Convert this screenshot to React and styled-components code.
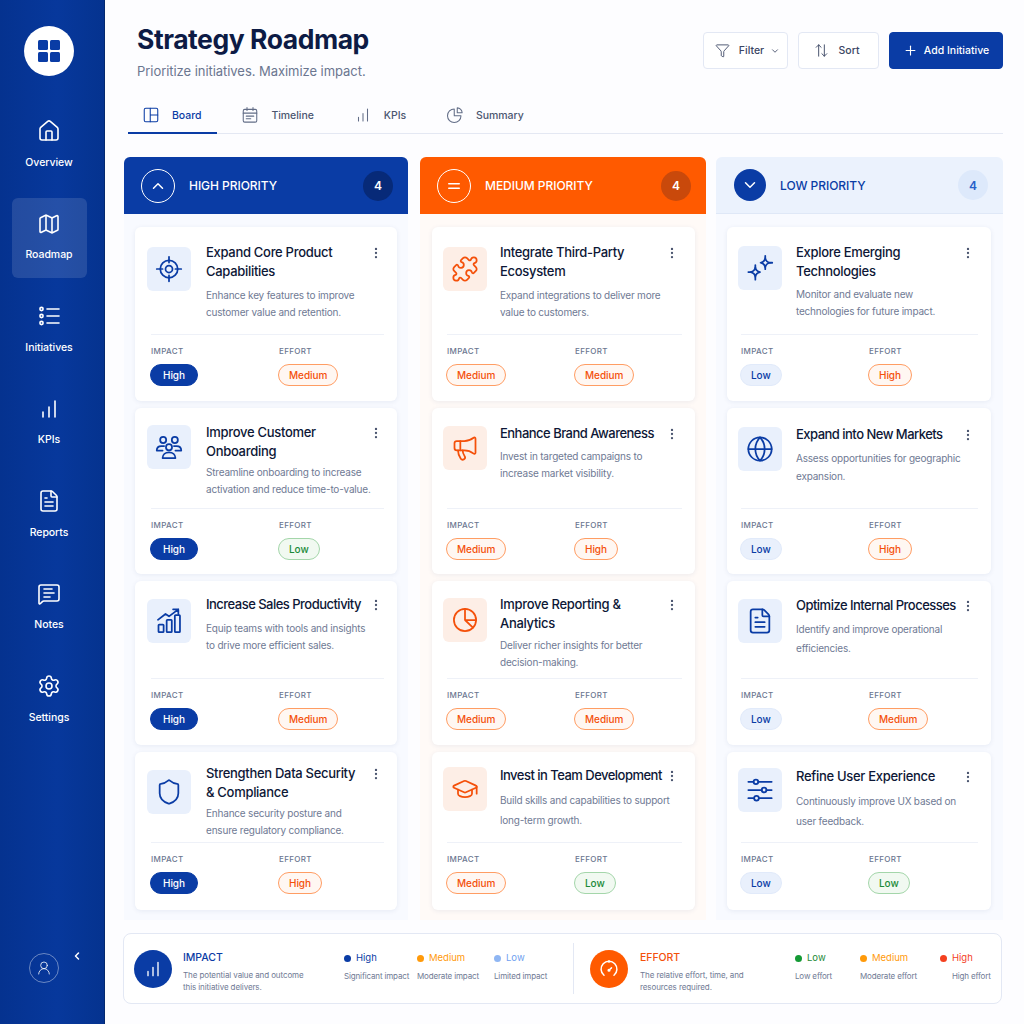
import React from "react";
import styled, { createGlobalStyle } from "styled-components";
import {
  Home, Map as MapIcon, FileText, MessageSquareText, Settings, Puzzle, Megaphone,
  GraduationCap, Globe, Shield, Funnel, ChevronDown, ChevronUp, ChevronLeft,
  Plus, Equal, EllipsisVertical, UserRound,
} from "lucide-react";

const BLUE = "#0a3ca5";
const ORANGE = "#f4500a";

const Global = createGlobalStyle`
  html, body { margin: 0; padding: 0; background: #fdfdff; }
  body { font-family: "Inter", "Liberation Sans", sans-serif; color: #0e1a3a; overflow: hidden; }
  * { box-sizing: border-box; }
`;

const Svg = ({ size = 24, sw = 1.6, children, ...p }) => (
  <svg width={size} height={size} viewBox="0 0 24 24" fill="none" stroke="currentColor" strokeWidth={sw} strokeLinecap="round" strokeLinejoin="round" {...p}>
    {children}
  </svg>
);
const Bars = (p) => (<Svg {...p}><path d="M6 20v-5M12 20v-10M18 20V4" /></Svg>);
const ListDots = (p) => (
  <Svg {...p}><circle cx="4.5" cy="5" r="1.6" /><circle cx="4.5" cy="12" r="1.6" /><circle cx="4.5" cy="19" r="1.6" /><path d="M10 5h12M10 12h12M10 19h12" /></Svg>
);
const Target = (p) => (
  <Svg {...p}><circle cx="12" cy="12" r="7.5" /><circle cx="12" cy="12" r="3" /><path d="M12 1.5v5M12 17.5v5M1.5 12h5M17.5 12h5" /></Svg>
);
const Team = (p) => (
  <Svg {...p}>
    <circle cx="7" cy="6" r="2.6" /><circle cx="17" cy="6" r="2.6" /><circle cx="12" cy="12.2" r="2.6" />
    <path d="M1.5 15c0-2.6 2-3.8 4-3.8h2.3M22.5 15c0-2.6-2-3.8-4-3.8h-2.3M1.5 15h5M22.5 15h-5" />
    <path d="M6.5 21.5c0-3 2.4-5 5.5-5s5.5 2 5.5 5z" />
  </Svg>
);
const GrowthChart = (p) => (
  <Svg {...p}>
    <rect x="3" y="15" width="4.4" height="6.5" rx=".6" /><rect x="10" y="11" width="4.4" height="10.5" rx=".6" /><rect x="17" y="7" width="4.4" height="14.5" rx=".6" />
    <path d="M2.5 11 9 6l3 2 8-6M15.5 2H20v4" />
  </Svg>
);
const Sparks = (p) => (
  <Svg {...p}>
    <path d="M16.5 3.500c.5 2.600 1.400 3.500 4 4-2.600.5-3.500 1.400-4 4-.5-2.600-1.400-3.500-4-4 2.600-.5 3.500-1.400 4-4z" />
    <path d="M8 11.500c.5 2.600 1.400 3.500 4 4-2.600.5-3.500 1.400-4 4-.5-2.600-1.400-3.500-4-4 2.600-.5 3.500-1.400 4-4z" />
    <path d="M16.5 1.500v2M16.5 11.500v1.500M8 19.500V22M8 9.500v2M2 15.500h2M20.500 7.500h2" />
  </Svg>
);
const Slices = (p) => (
  <Svg {...p}><circle cx="12" cy="12" r="9.5" /><path d="M12 2.500V12l6.800 6.600M12 12h9.500" /></Svg>
);
const Sliders = (p) => (
  <Svg {...p}>
    <path d="M2 5h4.500M10.500 5H22M2 12h11.500M17.500 12H22M2 19h5M11 19h11" />
    <circle cx="8.5" cy="5" r="2" /><circle cx="15.5" cy="12" r="2" /><circle cx="9" cy="19" r="2" />
  </Svg>
);
const BoardIcon = (p) => (<Svg {...p}><rect x="3" y="3" width="18" height="18" rx="2" /><path d="M11 3v18M11 12h10" /></Svg>);
const CalIcon = (p) => (<Svg {...p}><rect x="3" y="4.500" width="18" height="17" rx="2" /><path d="M8 2v4M16 2v4M3 9.500h18M7 13.500h10M7 17h6" /></Svg>);
const SummaryIcon = (p) => (<Svg {...p}><path d="M11 4a9 9 0 1 0 9 9h-9z" /><path d="M15 2.500a6.500 6.500 0 0 1 6.500 6.500H15z" /></Svg>);
const SortIcon = (p) => (<Svg {...p}><path d="M8 20V4M4.500 7.500 8 4l3.500 3.500M16 4v16M12.500 16.500 16 20l3.500-3.500" /></Svg>);
const GaugeIcon = (p) => (
  <Svg {...p}><path d="M6 19.500A9.500 9.500 0 1 1 18 19.500" /><path d="M12 13.500l3-3" /><circle cx="12" cy="13.500" r="1" /><path d="M12 2v2" /></Svg>
);

const Page = styled.div`
  width: 1024px; height: 1024px; display: flex; overflow: hidden; background: #fdfdff;
`;
const Sidebar = styled.aside`
  width: 105px; flex: none; height: 100%; display: flex; flex-direction: column; align-items: center;
  padding: 26px 6px 41px 0; color: #fff;
  background: linear-gradient(90deg, #05328f 0%, #07389c 55%, #05338f 100%);
  border-right: 1px solid #04296f;
`;
const Logo = styled.div`
  width: 50px; height: 50px; border-radius: 50%; background: #fff; margin-bottom: 29px; flex: none;
  display: grid; grid-template-columns: 10px 10px; grid-template-rows: 10px 10px; gap: 2px;
  place-content: center;
  & > i { background: ${BLUE}; border-radius: 1.5px; display: block; }
`;
const Nav = styled.nav`
  display: flex; flex-direction: column; gap: 12.5px; width: 75px;
`;
const NavItem = styled.div`
  height: 80px; border-radius: 6px; display: flex; flex-direction: column; align-items: center;
  padding-top: 14px; gap: 12.5px; color: #fff;
  font-size: 10.5px; font-weight: 500; letter-spacing: -0.05px;
  background: ${(p) => (p.$active ? "rgba(255,255,255,0.12)" : "transparent")};
`;
const SideFoot = styled.div`
  margin-top: auto; width: 100%; display: flex; align-items: flex-start; padding-left: 29px; gap: 12px;
`;
const Avatar = styled.div`
  width: 30px; height: 30px; border-radius: 50%; border: 1px solid rgba(255,255,255,.4);
  display: flex; align-items: center; justify-content: center; color: rgba(255,255,255,.85);
`;
const Collapse = styled.div`
  margin-top: -5px; height: 16px; display: flex; align-items: center; color: #fff;
`;
const Main = styled.main`
  flex: 1; min-width: 0; padding: 0 21px 0 19px; display: flex; flex-direction: column;
`;
const Header = styled.header`
  height: 98px; padding: 22px 0 0 13px; display: flex; justify-content: space-between; align-items: flex-start;
`;
const Title = styled.h1`
  margin: 0; font-size: 26.5px; line-height: 34px; font-weight: 700; letter-spacing: -0.45px; color: #0d1b45;
`;
const Sub = styled.p`
  margin: 7px 0 0; font-size: 13px; line-height: 16px; color: #6b7690; letter-spacing: -0.05px;
`;
const Actions = styled.div`
  display: flex; gap: 10px; margin-top: 10px;
`;
const Btn = styled.button`
  height: 37px; width: ${(p) => p.$w}px; border-radius: 4px; font: 500 10.5px "Inter", sans-serif;
  display: flex; align-items: center; justify-content: center; gap: ${(p) => p.$gap || 9}px;
  padding: 0 ${(p) => p.$pr || 0}px 0 ${(p) => p.$pl || 0}px;
  color: ${(p) => (p.$primary ? "#fff" : "#3b4663")};
  background: ${(p) => (p.$primary ? BLUE : "#fff")};
  border: 1px solid ${(p) => (p.$primary ? BLUE : "#e3e8f4")};
`;
const Caret = styled(ChevronDown)`
  margin-left: -3px;
`;
const Tabs = styled.div`
  margin-left: 4px; height: 36px; display: flex; gap: 10px; border-bottom: 1px solid #e4e8f3;
`;
const Tab = styled.div`
  height: 36px; padding: 0 16px 0 14px; display: flex; align-items: center; gap: 12px;
  font-size: 10.5px; font-weight: 500; letter-spacing: -0.05px;
  color: ${(p) => (p.$active ? BLUE : "#4b5670")};
  border-bottom: 2px solid ${(p) => (p.$active ? BLUE : "transparent")};
  & > svg { color: ${(p) => (p.$active ? BLUE : "#626d87")}; }
`;
const Board = styled.div`
  margin-top: 23px; display: flex;
`;
const Column = styled.section`
  width: ${(p) => p.$w}px; margin-left: ${(p) => p.$ml}px; flex: none;
  height: 763px; display: flex; flex-direction: column;
  background: ${(p) => (p.$tone === "orange" ? "#fffaf7" : "#f8faff")};
  border-radius: 6px 6px 0 0;
`;
const ColHead = styled.div`
  height: 57px; flex: none; display: flex; align-items: center; padding: 0 15px 0 17px;
  border-radius: 6px 6px 0 0; font-size: 12px; font-weight: 500; letter-spacing: -0.05px;
  background: ${(p) => ({ blue: BLUE, orange: "#ff5a00", light: "#ebf2fd" }[p.$tone])};
  color: ${(p) => (p.$tone === "light" ? BLUE : "#fff")};
  border-bottom: ${(p) => (p.$tone === "light" ? "1px solid #dfe8f7" : "none")};
`;
const HeadIcon = styled.div`
  border-radius: 50%; flex: none; margin-right: 14px;
  display: flex; align-items: center; justify-content: center; color: #fff;
  border: ${(p) => (p.$solid ? "none" : "1.5px solid #fff")};
  background: ${(p) => (p.$solid ? BLUE : "transparent")};
  margin-left: ${(p) => (p.$solid ? "1px" : "0")};
  width: ${(p) => (p.$solid ? "32px" : "34px")};
  height: ${(p) => (p.$solid ? "32px" : "34px")};
`;
const Count = styled.div`
  margin-left: auto; width: 30px; height: 30px; border-radius: 50%; display: flex; align-items: center; justify-content: center;
  font-size: 12px; font-weight: 600;
  background: ${(p) => ({ blue: "#072a78", orange: "#c9490b", light: "#dde9fb" }[p.$tone])};
  color: ${(p) => (p.$tone === "light" ? "#2760c9" : "#fff")};
`;
const ColBody = styled.div`
  flex: 1; display: flex; flex-direction: column; gap: 7px; padding: 13px ${(p) => p.$pr}px 0 ${(p) => p.$pl}px;
`;
const Card = styled.article`
  height: ${(p) => p.$h}px; flex: none; background: #fff; border-radius: 6px; display: flex; flex-direction: column;
  box-shadow: 0 1px 5px rgba(30, 50, 110, 0.08);
`;
const CardTop = styled.div`
  flex: 1; min-height: 0; display: grid; grid-template-columns: 44px minmax(0, 1fr) 18px; grid-template-rows: auto 1fr;
  column-gap: ${(p) => p.$gap}px; padding: 0 ${(p) => p.$r}px 0 ${(p) => p.$l}px;
`;
const IconBox = styled.div`
  grid-row: 1 / span 2; width: 44px; height: 44px; margin-top: ${(p) => p.$top}px; border-radius: 6px; display: flex; align-items: center; justify-content: center;
  background: ${(p) => (p.$tone === "orange" ? "#fdeee6" : "#e9f0fc")};
  color: ${(p) => (p.$tone === "orange" ? ORANGE : BLUE)};
`;
const CardTitle = styled.h3`
  margin: ${(p) => p.$top}px 0 0; font-size: 13px; line-height: 19px; font-weight: 500; color: #0d1736; white-space: pre;
  letter-spacing: ${(p) => (p.$tight ? "-0.52px" : "-0.3px")};
`;
const Menu = styled.div`
  display: flex; justify-content: center; color: #4b5670; margin-top: ${(p) => p.$top}px; height: 14px;
`;
const Desc = styled.p`
  grid-column: 2 / span 2; margin: ${(p) => p.$mt}px -6px 0 0; font-size: 10px; line-height: ${(p) => p.$lh}px; color: #6f7a94; letter-spacing: -0.2px; white-space: pre;
`;
const CardFoot = styled.div`
  flex: none; margin: 0 13px 0 ${(p) => p.$l}px; border-top: 1px solid #eef1f8; padding: 11px 0 ${(p) => p.$pb}px;
  display: grid; grid-template-columns: 128px 1fr;
`;
const Metric = styled.div`
  display: flex; flex-direction: column; gap: 8px; align-items: flex-start;
`;
const MetricLabel = styled.div`
  font-size: 8px; line-height: 10px; font-weight: 500; letter-spacing: 0.35px; color: #6b7690;
`;
const Pill = styled.div`
  height: 22px; margin-left: -1px; border-radius: 11px; display: flex; align-items: center;
  font-size: 10px; font-weight: 500; letter-spacing: -0.05px;
  ${(p) => ({
    solid: `background:${BLUE};color:#fff;border:1px solid ${BLUE};padding:0 12px;`,
    soft: `background:#e9f0fc;color:${BLUE};border:1px solid #e1eafa;padding:0 10px;`,
    orange: `background:#fff7f2;color:${ORANGE};border:1px solid #ff9d63;padding:0 10px;`,
    green: `background:#f1f9f1;color:#1c8a38;border:1px solid #a4d6aa;padding:0 10px;`,
  }[p.$kind])}
`;
const Legend = styled.footer`
  margin: 13px 0 0 -1px; height: 71px; width: 879px; background: #fff; border: 1px solid #e3e8f4; border-radius: 8px;
  display: flex; align-items: center; padding: 0 10px;
`;
const LegendCircle = styled.div`
  width: 38px; height: 38px; border-radius: 50%; flex: none; display: flex; align-items: center; justify-content: center; color: #fff;
  background: ${(p) => (p.$orange ? "#ff5a00" : BLUE)};
`;
const LegendText = styled.div`
  width: ${(p) => p.$w}px; flex: none; margin-left: ${(p) => p.$ml}px; padding-top: 6px;
`;
const LegendTitle = styled.div`
  font-size: 10.5px; line-height: 14px; font-weight: 500; color: ${(p) => (p.$orange ? ORANGE : BLUE)}; letter-spacing: -0.05px;
`;
const LegendDesc = styled.div`
  margin-top: 4px; font-size: 8px; line-height: 12px; color: #6f7a94; letter-spacing: -0.1px; white-space: pre-line;
`;
const LegendItem = styled.div`
  width: ${(p) => p.$w}px; flex: none; display: flex; flex-direction: column; gap: 5px; padding-bottom: 4px;
`;
const LegendKey = styled.div`
  display: flex; align-items: center; gap: 5px; font-size: 9.5px; line-height: 14px; color: ${(p) => p.$c};
  &::before { content: ""; width: 7px; height: 7px; border-radius: 50%; background: ${(p) => p.$dot || p.$c}; }
`;
const LegendSub = styled.div`
  font-size: 8px; line-height: 12px; color: #6f7a94; white-space: nowrap; letter-spacing: -0.15px;
  margin-left: ${(p) => p.$indent || 0}px;
`;
const Rule = styled.div`
  width: 1px; height: 51px; background: #e3e8f4; margin: 0 16px 0 ${(p) => p.$ml}px; flex: none;
`;

const nav = [
  ["Overview", Home], ["Roadmap", MapIcon, true], ["Initiatives", ListDots], ["KPIs", Bars],
  ["Reports", FileText], ["Notes", MessageSquareText], ["Settings", Settings],
];
const tabs = [
  ["Board", BoardIcon, true], ["Timeline", CalIcon], ["KPIs", Bars], ["Summary", SummaryIcon],
];
const HEIGHTS = [174, 166, 164, 158];
const PADS = [15, 14, 15, 16];
const cols = [
  {
    name: "HIGH PRIORITY", tone: "blue", Icon: ChevronUp, w: 284, ml: 0, bl: 11, br: 11, l: 12, r: 12, gap: 15, fl: 16,
    cards: [
      { t: "Expand Core Product\nCapabilities", d: "Enhance key features to improve\ncustomer value and retention.", I: Target, im: "High", ef: "Medium", it: 20, pt: 16, mt: 6, lh: 17 },
      { t: "Improve Customer\nOnboarding", d: "Streamline onboarding to increase\nactivation and reduce time-to-value.", I: Team, im: "High", ef: "Low", it: 17, pt: 15, mt: 3, lh: 17 },
      { t: "Increase Sales Productivity", tight: true, d: "Equip teams with tools and insights\nto drive more efficient sales.", I: GrowthChart, im: "High", ef: "Medium", it: 18, pt: 14, mt: 6, lh: 17 },
      { t: "Strengthen Data Security\n& Compliance", d: "Enhance security posture and\nensure regulatory compliance.", I: Shield, im: "High", ef: "High", it: 18, pt: 12, mt: 3, lh: 17 },
    ],
  },
  {
    name: "MEDIUM PRIORITY", tone: "orange", Icon: Equal, w: 286, ml: 12, bl: 12, br: 11, l: 11, r: 14, gap: 13, fl: 15,
    cards: [
      { t: "Integrate Third-Party\nEcosystem", d: "Expand integrations to deliver more\nvalue to customers.", I: Puzzle, im: "Medium", ef: "Medium", it: 20, pt: 16, mt: 6, lh: 17 },
      { t: "Enhance Brand Awareness", tight: true, d: "Invest in targeted campaigns to\nincrease market visibility.", I: Megaphone, im: "Medium", ef: "High", it: 18, pt: 16, mt: 5, lh: 17 },
      { t: "Improve Reporting &\nAnalytics", d: "Deliver richer insights for better\ndecision-making.", I: Slices, im: "Medium", ef: "Medium", it: 17, pt: 14, mt: 4, lh: 17 },
      { t: "Invest in Team Development", tight: true, d: "Build skills and capabilities to support\nlong-term growth.", I: GraduationCap, im: "Medium", ef: "Low", it: 15, pt: 14, mt: 5, lh: 20 },
    ],
  },
  {
    name: "LOW PRIORITY", tone: "light", Icon: ChevronDown, w: 287, ml: 10, bl: 11, br: 12, l: 11, r: 14, gap: 14, fl: 14,
    cards: [
      { t: "Explore Emerging\nTechnologies", d: "Monitor and evaluate new\ntechnologies for future impact.", I: Sparks, im: "Low", ef: "High", it: 19, pt: 16, mt: 5, lh: 17 },
      { t: "Expand into New Markets", tight: true, d: "Assess opportunities for geographic\nexpansion.", I: Globe, im: "Low", ef: "High", it: 19, pt: 17, mt: 5, lh: 18 },
      { t: "Optimize Internal Processes", tight: true, d: "Identify and improve operational\nefficiencies.", I: FileText, im: "Low", ef: "Medium", it: 18, pt: 15, mt: 5, lh: 19 },
      { t: "Refine User Experience", d: "Continuously improve UX based on\nuser feedback.", I: Sliders, im: "Low", ef: "Low", it: 16, pt: 15, mt: 5, lh: 20 },
    ],
  },
];
const impactKinds = { High: "solid", Medium: "orange", Low: "soft" };
const effortKind = (v) => (v === "Low" ? "green" : "orange");

export default function App() {
  return (
    <Page>
      <Global />
      <Sidebar>
        <Logo><i /><i /><i /><i /></Logo>
        <Nav>
          {nav.map(([label, Icon, active]) => (
            <NavItem key={label} $active={active}>
              <Icon size={24} strokeWidth={1.6} />
              <span>{label}</span>
            </NavItem>
          ))}
        </Nav>
        <SideFoot>
          <Avatar><UserRound size={16} strokeWidth={1.4} /></Avatar>
          <Collapse><ChevronLeft size={12} strokeWidth={3} /></Collapse>
        </SideFoot>
      </Sidebar>
      <Main>
        <Header>
          <div>
            <Title>Strategy Roadmap</Title>
            <Sub>Prioritize initiatives. Maximize impact.</Sub>
          </div>
          <Actions>
            <Btn $w={85} $pl={4}><Funnel size={15} strokeWidth={1.4} />Filter<Caret size={10} strokeWidth={2} /></Btn>
            <Btn $w={81} $pr={5}><SortIcon size={17} sw={1.3} />Sort</Btn>
            <Btn $w={114} $primary $gap={6}><Plus size={15} strokeWidth={1.8} />Add Initiative</Btn>
          </Actions>
        </Header>
        <Tabs>
          {tabs.map(([label, Icon, active]) => (
            <Tab key={label} $active={active}>
              <Icon size={18} sw={1.4} />
              {label}
            </Tab>
          ))}
        </Tabs>
        <Board>
          {cols.map((c) => (
            <Column key={c.name} $tone={c.tone} $w={c.w} $ml={c.ml}>
              <ColHead $tone={c.tone}>
                <HeadIcon $solid={c.tone === "light"}><c.Icon size={18} strokeWidth={2} /></HeadIcon>
                {c.name}
                <Count $tone={c.tone}>4</Count>
              </ColHead>
              <ColBody $pl={c.bl} $pr={c.br}>
                {c.cards.map((k, i) => (
                  <Card key={k.t} $h={HEIGHTS[i]}>
                    <CardTop $l={c.l} $r={c.r} $gap={c.gap}>
                      <IconBox $top={k.it} $tone={c.tone === "orange" ? "orange" : "blue"}><k.I size={28} sw={1.5} strokeWidth={1.5} /></IconBox>
                      <CardTitle $top={k.pt} $tight={k.tight}>{k.t}</CardTitle>
                      <Menu $top={k.pt + 3}><EllipsisVertical size={14} strokeWidth={2} /></Menu>
                      <Desc $mt={k.mt} $lh={k.lh}>{k.d}</Desc>
                    </CardTop>
                    <CardFoot $l={c.fl} $pb={PADS[i]}>
                      <Metric>
                        <MetricLabel>IMPACT</MetricLabel>
                        <Pill $kind={c.tone === "orange" ? "orange" : impactKinds[k.im]}>{k.im}</Pill>
                      </Metric>
                      <Metric>
                        <MetricLabel>EFFORT</MetricLabel>
                        <Pill $kind={effortKind(k.ef)}>{k.ef}</Pill>
                      </Metric>
                    </CardFoot>
                  </Card>
                ))}
              </ColBody>
            </Column>
          ))}
        </Board>
        <Legend>
          <LegendCircle><Bars size={20} sw={1.6} /></LegendCircle>
          <LegendText $w={161} $ml={11}>
            <LegendTitle>IMPACT</LegendTitle>
            <LegendDesc>{"The potential value and outcome\nthis initiative delivers."}</LegendDesc>
          </LegendText>
          <LegendItem $w={73}><LegendKey $c={BLUE}>High</LegendKey><LegendSub>Significant impact</LegendSub></LegendItem>
          <LegendItem $w={77}><LegendKey $c="#ff9a0a">Medium</LegendKey><LegendSub>Moderate impact</LegendSub></LegendItem>
          <LegendItem $w={54}><LegendKey $c="#6f9ff0" $dot="#8fb6f3">Low</LegendKey><LegendSub>Limited impact</LegendSub></LegendItem>
          <Rule $ml={25} />
          <LegendCircle $orange><GaugeIcon size={20} sw={1.8} /></LegendCircle>
          <LegendText $w={155} $ml={12}>
            <LegendTitle $orange>EFFORT</LegendTitle>
            <LegendDesc>{"The relative effort, time, and\nresources required."}</LegendDesc>
          </LegendText>
          <LegendItem $w={65}><LegendKey $c="#1c8a38" $dot="#149a35">Low</LegendKey><LegendSub>Low effort</LegendSub></LegendItem>
          <LegendItem $w={80}><LegendKey $c="#ff9a0a">Medium</LegendKey><LegendSub>Moderate effort</LegendSub></LegendItem>
          <LegendItem $w={52}><LegendKey $c="#f4401f">High</LegendKey><LegendSub $indent={12}>High effort</LegendSub></LegendItem>
        </Legend>
      </Main>
    </Page>
  );
}
